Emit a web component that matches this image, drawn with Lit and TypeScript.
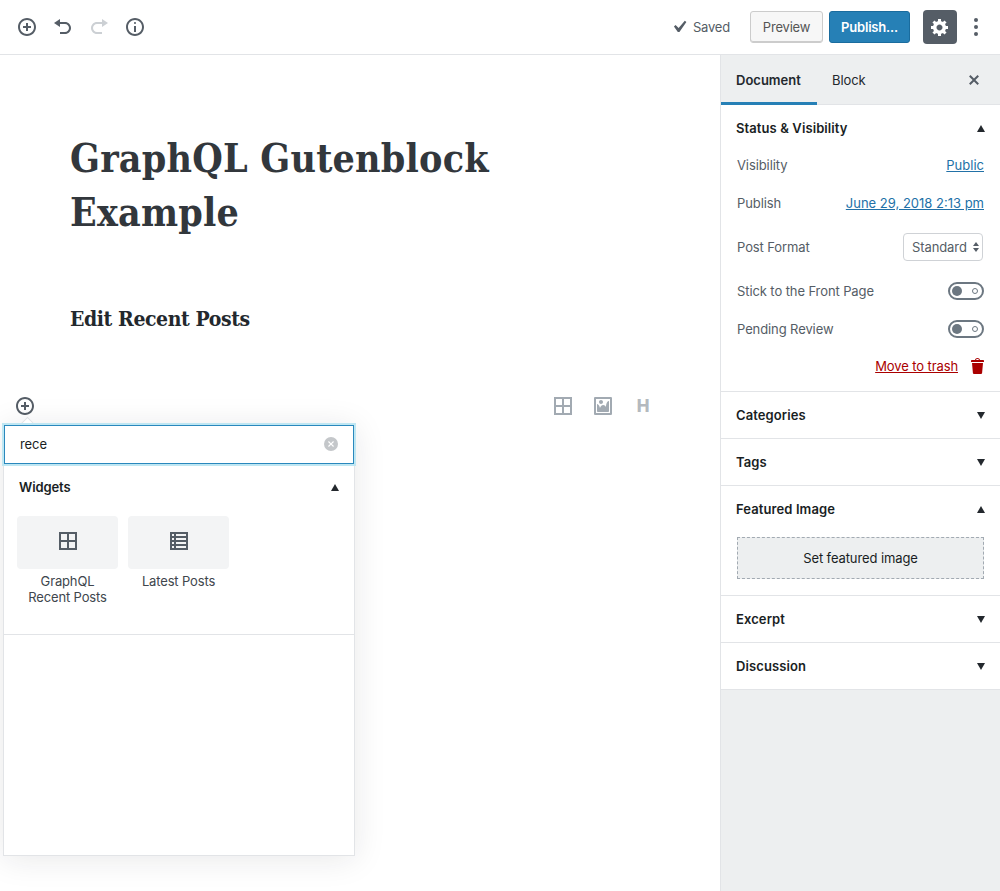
import { LitElement, html, css, svg } from 'lit';
import { customElement } from 'lit/decorators.js';

const icon = (d: string, size = 20) => html`<svg class="ico" width=${size} height=${size} viewBox="0 0 20 20">${svg`<path fill="currentColor" d=${d}></path>`}</svg>`;

const INSERT = 'M10 1c-5 0-9 4-9 9s4 9 9 9 9-4 9-9-4-9-9-9zm0 16c-3.9 0-7-3.1-7-7s3.1-7 7-7 7 3.1 7 7-3.1 7-7 7zm1-11H9v3H6v2h3v3h2v-3h3V9h-3V6z';
const UNDO = 'M12 5H7V2L1 6l6 4V7h5c2.2 0 4 1.8 4 4s-1.8 4-4 4H7v2h5c3.3 0 6-2.7 6-6s-2.7-6-6-6z';
const REDO = 'M8 5h5V2l6 4-6 4V7H8c-2.2 0-4 1.8-4 4s1.8 4 4 4h5v2H8c-3.3 0-6-2.7-6-6s2.7-6 6-6z';
const INFO = 'M9 15h2V9H9v6zm1-10c-.5 0-1 .5-1 1s.5 1 1 1 1-.5 1-1-.5-1-1-1zm0-4c-5 0-9 4-9 9s4 9 9 9 9-4 9-9-4-9-9-9zm0 16c-3.9 0-7-3.1-7-7s3.1-7 7-7 7 3.1 7 7-3.1 7-7 7z';
const GEAR = 'M18 12h-2.18c-.17.7-.44 1.35-.81 1.93l1.54 1.54-2.1 2.1-1.54-1.54c-.58.36-1.23.63-1.91.79V19H8v-2.18c-.68-.16-1.33-.43-1.91-.79l-1.54 1.54-2.12-2.12 1.54-1.54c-.36-.58-.63-1.23-.79-1.91H1V9.03h2.17c.16-.7.44-1.35.8-1.94L2.43 5.55l2.1-2.1 1.54 1.54c.58-.37 1.24-.64 1.93-.81V2h3v2.18c.68.16 1.33.43 1.91.79l1.54-1.54 2.12 2.12-1.54 1.54c.36.59.64 1.24.8 1.94H18V12zm-8.5 1.5c1.66 0 3-1.34 3-3s-1.34-3-3-3-3 1.34-3 3 1.34 3 3 3z';
const CHECK = 'M14.83 4.89l1.34.94-5.81 8.38H9.02L5.78 9.67l1.34-1.25 2.57 2.4z';
const CLOSE = 'M14.95 6.46L11.41 10l3.54 3.54-1.41 1.41L10 11.42l-3.53 3.53-1.42-1.42L8.58 10 5.05 6.47l1.42-1.42L10 8.58l3.54-3.53z';
const TRASH = 'M12 4h3c.6 0 1 .4 1 1v1H3V5c0-.6.5-1 1-1h3c.2-1.1 1.3-2 2.5-2s2.3.9 2.5 2zM8 4h3c-.2-.6-.9-1-1.5-1S8.2 3.4 8 4zM4 7h11l-.9 10.1c0 .5-.5.9-1 .9H5.9c-.5 0-.9-.4-1-.9L4 7z';
const IMAGE = 'M2.25 1h15.5c.69 0 1.25.56 1.25 1.25v15.5c0 .69-.56 1.25-1.25 1.25H2.25C1.56 19 1 18.44 1 17.75V2.25C1 1.56 1.56 1 2.25 1zM17 17V3H3v14h14zM10 6c0-1.1-.9-2-2-2s-2 .9-2 2 .9 2 2 2 2-.9 2-2zm3 5s0-6 3-6v10c0 .55-.45 1-1 1H5c-.55 0-1-.45-1-1V8c2 0 3 4 3 4s1-3 3-3 3 2 3 2z';
const GRID = 'M0 0h18v18H0V0zm2 2v6h6V2H2zm8 0v6h6V2h-6zM2 10v6h6v-6H2zm8 0v6h6v-6h-6z';
const LIST = 'M0 0h18v18H0V0zm2 2v2h2V2H2zm4 0v2h10V2H6zM2 6v2h2V6H2zm4 0v2h10V6H6zm-4 4v2h2v-2H2zm4 0v2h10v-2H6zm-4 4v2h2v-2H2zm4 0v2h10v-2H6z';

const square = (d: string) => html`<svg class="ico" width="18" height="18" viewBox="0 0 18 18">${svg`<path fill="currentColor" fill-rule="evenodd" d=${d}></path>`}</svg>`;
const caret = (up: boolean) => html`<span class=${up ? 'caret up' : 'caret'}></span>`;

@customElement('app-root')
class AppRoot extends LitElement {
  static styles = css`
    :host {
      display: block;
      height: 891px;
      overflow: hidden;
      font-family: Inter, 'Noto Sans', sans-serif;
      font-size: 13px;
      color: #191e23;
      background: #fff;
    }

    .ico { display: block; }

    .layout { display: flex; flex-direction: column; height: 891px; }

    /* top bar */
    .topbar {
      display: flex;
      align-items: center;
      justify-content: space-between;
      height: 54px;
      flex: none;
      border-bottom: 1px solid #e2e4e7;
      padding: 0 9px;
    }
    .tools, .actions { display: flex; align-items: center; }
    .tool { width: 36px; height: 36px; display: flex; align-items: center; justify-content: center; color: #555d66; }
    .tool.off { color: #ccd0d4; }

    .saved { display: flex; align-items: center; color: #555d66; letter-spacing: -0.2px; margin-right: 20px; }
    .saved .ico { margin-right: 2px; }
    .btn {
      box-sizing: border-box;
      height: 32px;
      display: flex;
      align-items: center;
      justify-content: center;
      border-radius: 3px;
      letter-spacing: -0.2px;
    }
    .preview {
      width: 73px;
      background: #f7f7f7;
      border: 1px solid #ccc;
      box-shadow: inset 0 -1px 0 #ccc;
      color: #555;
      margin-right: 6px;
    }
    .publish {
      width: 81px;
      background: #2680b6;
      border: 1px solid #1a6c9e;
      color: #fff;
      font-weight: 600;
      margin-right: 13px;
    }
    .gear {
      width: 34px;
      height: 34px;
      border-radius: 4px;
      background: #555d66;
      color: #fff;
      display: flex;
      align-items: center;
      justify-content: center;
      margin-right: 11px;
    }
    .dots { width: 16px; display: flex; flex-direction: column; align-items: center; gap: 3px; margin-right: 7px; }
    .dots span { width: 4px; height: 4px; border-radius: 50%; background: #555d66; }

    .body { flex: 1; display: flex; min-height: 0; }

    /* editor column */
    .editor { flex: 1; position: relative; }
    .title {
      margin: 0;
      padding: 76px 0 0 70px;
      width: 440px;
      font-family: 'DejaVu Serif', 'Liberation Serif', serif;
      font-stretch: condensed;
      font-size: 39px;
      font-weight: 700;
      letter-spacing: 0.2px;
      line-height: 54px;
      color: #32373c;
    }
    .subtitle {
      margin: 65px 0 0 70px;
      font-family: 'DejaVu Serif', 'Liberation Serif', serif;
      font-stretch: condensed;
      font-size: 21px;
      font-weight: 700;
      letter-spacing: -0.4px;
      line-height: 30px;
      color: #23282d;
    }
    .appender {
      display: flex;
      align-items: center;
      justify-content: space-between;
      margin-top: 60px;
      height: 24px;
      padding: 0 68px 0 15px;
    }
    .appender .plus { color: #555d66; }
    .quick { display: flex; align-items: center; gap: 21px; color: #a2aab2; }
    .quick .h { width: 18px; text-align: center; font-size: 17px; font-weight: 800; line-height: 18px; color: #b4b9be; }

    /* inserter popover */
    .popover {
      position: absolute;
      left: 3px;
      top: 369px;
      width: 350px;
      height: 430px;
      background: #fff;
      border: 1px solid #e2e4e7;
      box-shadow: 0 3px 30px rgba(25, 30, 35, 0.1);
    }
    .popover::before {
      content: '';
      position: absolute;
      left: 18px;
      top: -6px;
      width: 10px;
      height: 10px;
      background: #fff;
      border: 1px solid #e2e4e7;
      border-right: 0;
      border-bottom: 0;
      transform: rotate(45deg);
    }
    .search {
      position: relative;
      box-sizing: border-box;
      height: 39px;
      display: flex;
      align-items: center;
      justify-content: space-between;
      padding: 0 15px 1px;
      background: #fff;
      border: 1px solid #2a88bd;
      box-shadow: 0 0 0 2px #bfe7f3;
      font-size: 13px;
      letter-spacing: -0.1px;
    }
    .clear {
      width: 14px;
      height: 14px;
      border-radius: 50%;
      background: #c4c7ca;
      color: #fff;
      display: flex;
      align-items: center;
      justify-content: center;
    }
    .section {
      height: 170px;
      border-bottom: 1px solid #e2e4e7;
      padding: 0 15px;
    }
    .section-head {
      display: flex;
      align-items: center;
      justify-content: space-between;
      height: 46px;
      font-weight: 600;
      letter-spacing: -0.1px;
    }
    .blocks { display: flex; gap: 10px; margin: 6px 0 0 -2px; }
    .block { width: 101px; }
    .tile {
      box-sizing: border-box;
      height: 53px;
      padding-bottom: 3px;
      border-radius: 4px;
      background: #f3f4f5;
      color: #555d66;
      display: flex;
      align-items: center;
      justify-content: center;
    }
    .block-name { margin-top: 4px; text-align: center; line-height: 16px; color: #40464d; letter-spacing: -0.15px; }

    .caret { width: 0; height: 0; border-left: 4.5px solid transparent; border-right: 4.5px solid transparent; border-top: 7px solid #23282d; }
    .caret.up { border-top: 0; border-bottom: 7px solid #23282d; }
    .panel-head .caret { margin-right: -1px; }

    /* sidebar */
    .sidebar {
      flex: none;
      box-sizing: border-box;
      width: 280px;
      border-left: 1px solid #e2e4e7;
      background: #edeff0;
    }
    .tabs {
      height: 50px;
      display: flex;
      align-items: stretch;
      box-sizing: border-box;
      border-bottom: 1px solid #e2e4e7;
      padding-right: 16px;
    }
    .tab { display: flex; align-items: center; padding: 0 15px; letter-spacing: -0.1px; color: #23282d; }
    .tab.active { width: 96px; box-sizing: border-box; font-weight: 600; letter-spacing: 0; border-bottom: 3px solid #2680b6; padding-top: 3px; margin-bottom: -1px; }
    .tab-close { margin-left: auto; display: flex; align-items: center; color: #555d66; }

    .panel { background: #fff; border-bottom: 1px solid #e2e4e7; padding: 0 16px 0 15px; }
    .panel-head {
      display: flex;
      align-items: center;
      justify-content: space-between;
      height: 46px;
      font-weight: 600;
      letter-spacing: 0.1px;
    }
    .status { height: 287px; box-sizing: border-box; }
    .row { display: flex; align-items: center; justify-content: space-between; color: #555d66; letter-spacing: -0.1px; margin-left: 1px; }
    .row a { color: #2271a7; text-decoration: underline; letter-spacing: 0; }
    .r1 { height: 20px; margin-top: 4px; }
    .r2 { height: 20px; margin-top: 18px; }
    .r3 { height: 28px; margin-top: 20px; }
    .r4 { height: 18px; margin-top: 21px; }
    .r5 { height: 18px; margin-top: 20px; }
    .trash { justify-content: flex-end; margin-top: 19px; height: 18px; gap: 10px; color: #a00; }
    .row.trash a { color: #a00; letter-spacing: -0.1px; }
    .trash .ico { margin-right: -4px; }
    .select {
      box-sizing: border-box;
      width: 80px;
      height: 28px;
      margin-right: 1px;
      border: 1px solid #cfd2d6;
      border-radius: 4px;
      display: flex;
      align-items: center;
      justify-content: space-between;
      padding: 0 3px 0 8px;
    }
    .updown { display: flex; flex-direction: column; gap: 2px; }
    .updown i { display: block; width: 0; height: 0; border-left: 3.5px solid transparent; border-right: 3.5px solid transparent; }
    .updown i:first-child { border-bottom: 4px solid #555d66; }
    .updown i:last-child { border-top: 4px solid #555d66; }
    .toggle {
      box-sizing: border-box;
      width: 36px;
      height: 18px;
      border: 2px solid #6c7781;
      border-radius: 9px;
      display: flex;
      align-items: center;
      justify-content: space-between;
      padding: 0 4px 0 2px;
    }
    .toggle b { width: 10px; height: 10px; border-radius: 50%; background: #6c7781; }
    .toggle i { box-sizing: border-box; width: 6px; height: 6px; border-radius: 50%; border: 1px solid #6c7781; }
    .featured { height: 110px; box-sizing: border-box; }
    .set-image {
      box-sizing: border-box;
      height: 42px;
      margin: 5px 0 0 1px;
      background: #edeff0;
      border: 1px dashed #a2aab2;
      display: flex;
      align-items: center;
      justify-content: center;
      letter-spacing: -0.1px;
    }
  `;

  private _panel(name: string) {
    return html`<div class="panel"><div class="panel-head">${name}${caret(false)}</div></div>`;
  }

  private _toggle() {
    return html`<span class="toggle"><b></b><i></i></span>`;
  }

  render() {
    return html`
      <div class="layout">
        <header class="topbar">
          <div class="tools">
            <span class="tool">${icon(INSERT)}</span>
            <span class="tool">${icon(UNDO)}</span>
            <span class="tool off">${icon(REDO)}</span>
            <span class="tool">${icon(INFO)}</span>
          </div>
          <div class="actions">
            <span class="saved">${icon(CHECK, 24)}Saved</span>
            <span class="btn preview">Preview</span>
            <span class="btn publish">Publish...</span>
            <span class="gear">${icon(GEAR)}</span>
            <span class="dots"><span></span><span></span><span></span></span>
          </div>
        </header>
        <div class="body">
          <main class="editor">
            <h1 class="title">GraphQL Gutenblock Example</h1>
            <h2 class="subtitle">Edit Recent Posts</h2>
            <div class="appender">
              <span class="plus">${icon(INSERT)}</span>
              <div class="quick">
                ${square(GRID)}
                ${icon(IMAGE)}
                <span class="h">H</span>
              </div>
            </div>
            <div class="popover">
              <div class="search">
                rece
                <span class="clear">${icon(CLOSE, 12)}</span>
              </div>
              <div class="section">
                <div class="section-head">Widgets${caret(true)}</div>
                <div class="blocks">
                  <div class="block">
                    <div class="tile">${square(GRID)}</div>
                    <div class="block-name">GraphQL<br />Recent Posts</div>
                  </div>
                  <div class="block">
                    <div class="tile">${square(LIST)}</div>
                    <div class="block-name">Latest Posts</div>
                  </div>
                </div>
              </div>
            </div>
          </main>
          <aside class="sidebar">
            <div class="tabs">
              <span class="tab active">Document</span>
              <span class="tab">Block</span>
              <span class="tab-close">${icon(CLOSE)}</span>
            </div>
            <section class="panel status">
              <div class="panel-head">Status &amp; Visibility${caret(true)}</div>
              <div class="row r1"><span>Visibility</span><a>Public</a></div>
              <div class="row r2"><span>Publish</span><a>June 29, 2018 2:13 pm</a></div>
              <div class="row r3">
                <span>Post Format</span>
                <span class="select">Standard<span class="updown"><i></i><i></i></span></span>
              </div>
              <div class="row r4"><span>Stick to the Front Page</span>${this._toggle()}</div>
              <div class="row r5"><span>Pending Review</span>${this._toggle()}</div>
              <div class="row trash"><a>Move to trash</a>${icon(TRASH)}</div>
            </section>
            ${this._panel('Categories')}
            ${this._panel('Tags')}
            <section class="panel featured">
              <div class="panel-head">Featured Image${caret(true)}</div>
              <div class="set-image">Set featured image</div>
            </section>
            ${this._panel('Excerpt')}
            ${this._panel('Discussion')}
          </aside>
        </div>
      </div>
    `;
  }
}
